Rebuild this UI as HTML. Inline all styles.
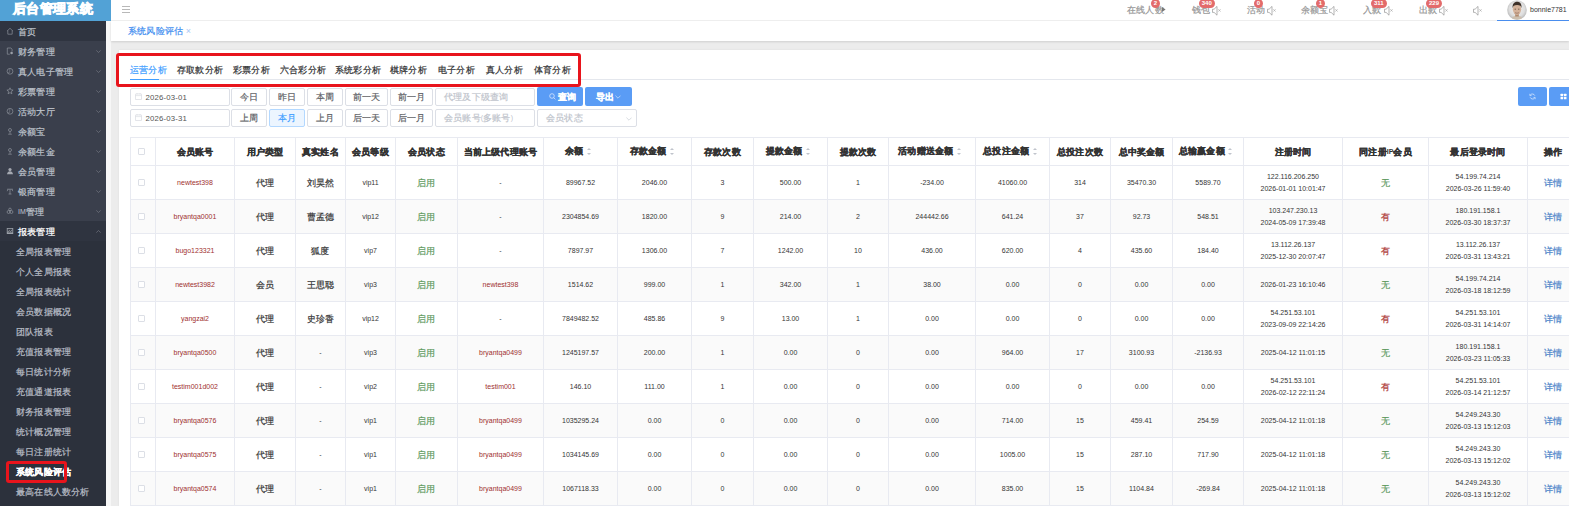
<!DOCTYPE html>
<html><head><meta charset="utf-8">
<style>
*{box-sizing:border-box;margin:0;padding:0}
html,body{width:1569px;height:506px;overflow:hidden;background:#fff;font-family:"Liberation Sans",sans-serif;color:#606266}
.abs{position:absolute}
#logo{position:absolute;left:0;top:0;width:111px;height:21px;background:#52a2d6;color:#fff;font-weight:bold;font-size:9.8px;line-height:17.6px;text-align:center;padding-right:5px}
#logo .z{-webkit-text-stroke:0.8px #fff}
#top{position:absolute;left:111px;top:0;width:1458px;height:21px;background:#fff;border-bottom:1px solid #f0f0f0}
#burger{position:absolute;left:11px;top:6px;width:8px;height:7px}
#burger i{display:block;height:0.8px;background:#b8b8b8;margin-bottom:2.2px}
.nv{position:absolute;top:6px;font-size:7px;line-height:7px;color:#959595;white-space:nowrap}
.bdg{position:absolute;top:-1px;height:8.5px;border-radius:4.5px;background:#e36b6b;color:#fff;font-size:6px;line-height:9px;text-align:center;font-weight:bold}
.spk{position:absolute;top:5.5px}
#ubar{position:absolute;left:1497px;top:20px;width:72px;height:1px;background:#4a8ff0}
#uname{position:absolute;left:1530px;top:6px;font-size:7px;line-height:7px;color:#333}

#side{position:absolute;left:0;top:21px;width:106px;height:485px;background:#2c313c;overflow:hidden}
#strip{position:absolute;left:106px;top:21px;width:5px;height:485px;background:#f7f7f7}
.si{position:relative;height:20px;padding-top:1.6px;line-height:18px;font-size:7px;color:#bfc4cc;padding-left:18px;white-space:nowrap}
.si.home{background:#2f3440}
.si.mid{background:#3a3f4c}
.si.rep{color:#fff;background:#2f3440}
.si .ic{position:absolute;left:5.5px;top:6px}
.si .chev{position:absolute;left:96px;top:9px}
.ss{height:20px;padding-top:1.6px;line-height:18px;font-size:7px;color:#b9bec7;padding-left:16px;white-space:nowrap}
.ss.act{color:#fff;font-weight:bold}

#main{position:absolute;left:111px;top:21px;width:1458px;height:485px;background:#ececec}
#tags{position:absolute;left:111px;top:21px;width:1458px;height:20px;background:#fff;box-shadow:0 1px 2px rgba(0,0,0,.12)}
#tag{position:absolute;left:17px;top:6px;font-size:7px;line-height:7px;color:#3d8cf0;white-space:nowrap}
#tag b{font-weight:normal;color:#a8c8f5;margin-left:2.7px;font-size:9px;vertical-align:-1px}
#card{position:absolute;left:119px;top:50px;width:1450px;height:456px;background:#fff;box-shadow:0 0 2px rgba(0,0,0,.07)}

#tabline{position:absolute;left:130px;top:79px;width:1439px;height:1px;background:#e4e7ed}
.tb{position:absolute;top:66px;font-size:7px;line-height:8px;color:#303133;white-space:nowrap}
.tb.on{color:#409eff}
#tabbar{position:absolute;left:130px;top:79px;width:28.5px;height:1px;background:#409eff}
#redbox{position:absolute;left:115.5px;top:53px;width:465px;height:34px;border:3px solid #e8141c;border-radius:3px}
#redside{position:absolute;left:5.5px;top:461.3px;width:61px;height:21.5px;border:3px solid #e8141c;border-radius:3px}

.in{position:absolute;height:18px;border:1px solid #dcdfe6;border-radius:2px;background:#fff;font-size:7px;line-height:16px;color:#606266;white-space:nowrap}
.in.ph{color:#c0c4cc;padding-left:8px}
.bt{position:absolute;height:18px;border:1px solid #dcdfe6;border-radius:2px;background:#fff;font-size:7px;line-height:16px;color:#606266;text-align:center}
.bt.on{background:#ecf5ff;border-color:#b3d8ff;color:#409eff}
.pb{position:absolute;height:19px;border-radius:2px;background:#5a9cf5;color:#fff;font-size:7px;line-height:19px;text-align:center;font-weight:bold}
.cal{position:absolute;left:4px;top:4.2px}
.in.dt{padding-left:14.6px;font-size:7.8px;letter-spacing:0.15px;color:#555;line-height:17px}

#tbl{position:absolute;left:130px;top:137px;border-collapse:collapse;table-layout:fixed;font-size:7px;color:#353535}
#tbl th,#tbl td{border:1px solid #e8eaf1;text-align:center;vertical-align:middle;white-space:nowrap;overflow:hidden;padding:0}
#tbl th{height:28px;font-weight:bold;color:#333}
#tbl td{height:34px}
#tbl tbody tr:nth-child(even) td{background:#fafafa}
.cb{display:inline-block;position:relative;left:-1.5px;width:7px;height:7px;border:1px solid #dcdfe6;border-radius:1px;background:#fff;vertical-align:middle}
.sort{display:inline-block;width:4px;height:8px;margin-left:3.5px;margin-right:5px;vertical-align:middle;position:relative}
.sort:before{content:"";position:absolute;left:0;top:0;border:2px solid transparent;border-bottom:2px solid #c0c4cc;border-top:0}
.sort:after{content:"";position:absolute;left:0;top:5px;border:2px solid transparent;border-top:2px solid #c0c4cc;border-bottom:0}
td.lk{color:#a03030}
td.gn{color:#5f9a5f}
td.rd{color:#b04040}
td.bl{color:#4a82c8}
td.two .l1,td.two .l2{display:block;line-height:11.5px}
.z{font-size:1.33em;letter-spacing:0.02em;vertical-align:-0.08em;line-height:1px;-webkit-text-stroke:0.2px currentColor}
#tbl th .z,.si.rep .z,.ss.act .z,.pb .z{-webkit-text-stroke:0.25px currentColor}
</style></head><body>
<div id="logo"><span class="z">后台管理系统</span></div>
<div id="top">
  <div id="burger"><i></i><i></i><i></i></div>
</div>
<div class="nv" style="left:1127px"><span class="z">在线人数</span></div><div class="bdg" style="left:1151px;width:9px">2</div><svg class="abs" style="left:1162px;top:7px" width="4" height="5" viewBox="0 0 4 5"><path d="M0 0L3.6 2.5L0 5z" fill="#777"/></svg><div class="nv" style="left:1191.5px"><span class="z">钱包</span></div><div class="bdg" style="left:1198.5px;width:16.5px">340</div><svg class="spk" style="left:1212px" width="10" height="10" viewBox="0 0 10 10"><path d="M0.5 3.2h1.6L5 0.4v8.8L2.1 6.4H0.5z" fill="none" stroke="#8c8c8c" stroke-width="0.65" stroke-linejoin="round"/><path d="M6.3 3.2l2.3 2.4M8.6 3.2L6.3 5.6" stroke="#999" stroke-width="0.55"/></svg><div class="nv" style="left:1246.5px"><span class="z">活动</span></div><div class="bdg" style="left:1254px;width:9px">0</div><svg class="spk" style="left:1267px" width="10" height="10" viewBox="0 0 10 10"><path d="M0.5 3.2h1.6L5 0.4v8.8L2.1 6.4H0.5z" fill="none" stroke="#8c8c8c" stroke-width="0.65" stroke-linejoin="round"/><path d="M6.3 3.2l2.3 2.4M8.6 3.2L6.3 5.6" stroke="#999" stroke-width="0.55"/></svg><div class="nv" style="left:1301px"><span class="z">余额宝</span></div><div class="bdg" style="left:1316px;width:9px">1</div><svg class="spk" style="left:1329px" width="10" height="10" viewBox="0 0 10 10"><path d="M0.5 3.2h1.6L5 0.4v8.8L2.1 6.4H0.5z" fill="none" stroke="#8c8c8c" stroke-width="0.65" stroke-linejoin="round"/><path d="M6.3 3.2l2.3 2.4M8.6 3.2L6.3 5.6" stroke="#999" stroke-width="0.55"/></svg><div class="nv" style="left:1363px"><span class="z">入款</span></div><div class="bdg" style="left:1370.5px;width:16.5px">311</div><svg class="spk" style="left:1384px" width="10" height="10" viewBox="0 0 10 10"><path d="M0.5 3.2h1.6L5 0.4v8.8L2.1 6.4H0.5z" fill="none" stroke="#8c8c8c" stroke-width="0.65" stroke-linejoin="round"/><path d="M6.3 3.2l2.3 2.4M8.6 3.2L6.3 5.6" stroke="#999" stroke-width="0.55"/></svg><div class="nv" style="left:1418.5px"><span class="z">出款</span></div><div class="bdg" style="left:1426px;width:16px">229</div><svg class="spk" style="left:1439px" width="10" height="10" viewBox="0 0 10 10"><path d="M0.5 3.2h1.6L5 0.4v8.8L2.1 6.4H0.5z" fill="none" stroke="#8c8c8c" stroke-width="0.65" stroke-linejoin="round"/><path d="M6.3 3.2l2.3 2.4M8.6 3.2L6.3 5.6" stroke="#999" stroke-width="0.55"/></svg><svg class="spk" style="left:1473px" width="10" height="10" viewBox="0 0 10 10"><path d="M0.5 3.2h1.6L5 0.4v8.8L2.1 6.4H0.5z" fill="none" stroke="#8c8c8c" stroke-width="0.65" stroke-linejoin="round"/><path d="M6.3 3.2l2.3 2.4M8.6 3.2L6.3 5.6" stroke="#999" stroke-width="0.55"/></svg><div id="ubar"></div><svg class="abs" style="left:1507px;top:-0.5px" width="20" height="20" viewBox="0 0 20 20"><defs><radialGradient id="ag" cx="50%" cy="45%" r="55%"><stop offset="0" stop-color="#f4f4f4"/><stop offset="0.7" stop-color="#dedede"/><stop offset="1" stop-color="#b8b8b8"/></radialGradient><clipPath id="ac"><circle cx="10" cy="10" r="9.6"/></clipPath></defs><circle cx="10" cy="10" r="9.8" fill="url(#ag)"/><g clip-path="url(#ac)"><path d="M4 20c0.5-3 2.5-4.2 6-4.2s5.5 1.2 6 4.2z" fill="#cdbfae"/><rect x="8.2" y="13" width="3.6" height="3.5" fill="#b08a70"/><ellipse cx="10" cy="9.3" rx="4.2" ry="5.6" fill="#d4b29a"/><path d="M5.6 8.2c-0.4-4 1.6-6.4 4.5-6.4s4.8 2 4.4 6.4c-0.4-2-1.4-3.2-4.4-3.2s-4.1 1.2-4.5 3.2z" fill="#3e3129"/><path d="M7.6 9.2h1.4M11 9.2h1.4" stroke="#5a4436" stroke-width="0.7"/><path d="M8 12.6c1.2 0.8 2.8 0.8 4 0" stroke="#8a6250" stroke-width="0.6" fill="none"/></g></svg><div id="uname">bonnie7781</div>
<div id="side"><div class="si home"><svg class="ic" width="8" height="8" viewBox="0 0 8 8"><path d="M1 4.2L4 1.3l3 2.9M1.8 3.6v3.6h4.4V3.6" fill="none" stroke="#9ba0a8" stroke-width="0.6"/></svg><span class="z">首页</span></div><div class="si mid"><svg class="ic" width="8" height="8" viewBox="0 0 8 8"><path d="M1.3 1h3.6l1.2 1.2V4.5M1.3 1v6.2h2.5" fill="none" stroke="#9ba0a8" stroke-width="0.6"/><circle cx="5.6" cy="6" r="1.3" fill="#9ba0a8"/></svg><span class="z">财务管理</span><svg class="chev" width="5" height="3" viewBox="0 0 5 3"><path d="M0.3 0.4L2.5 2.5 4.7 0.4" fill="none" stroke="#7d828b" stroke-width="0.6"/></svg></div><div class="si mid"><svg class="ic" width="8" height="8" viewBox="0 0 8 8"><circle cx="4" cy="4.3" r="2.9" fill="none" stroke="#9ba0a8" stroke-width="0.6"/><path d="M2.6 6.3c0.3-1.2 1-1.8 1.6-1.8M3 3h1.4" fill="none" stroke="#9ba0a8" stroke-width="0.6"/></svg><span class="z">真人电子管理</span><svg class="chev" width="5" height="3" viewBox="0 0 5 3"><path d="M0.3 0.4L2.5 2.5 4.7 0.4" fill="none" stroke="#7d828b" stroke-width="0.6"/></svg></div><div class="si mid"><svg class="ic" width="8" height="8" viewBox="0 0 8 8"><path d="M4 0.8l0.9 2.1 2.2 0.2-1.7 1.5 0.5 2.2L4 5.6 2.1 6.8l0.5-2.2L0.9 3.1l2.2-0.2z" fill="none" stroke="#9ba0a8" stroke-width="0.6"/></svg><span class="z">彩票管理</span><svg class="chev" width="5" height="3" viewBox="0 0 5 3"><path d="M0.3 0.4L2.5 2.5 4.7 0.4" fill="none" stroke="#7d828b" stroke-width="0.6"/></svg></div><div class="si mid"><svg class="ic" width="8" height="8" viewBox="0 0 8 8"><circle cx="4" cy="4.3" r="2.9" fill="none" stroke="#9ba0a8" stroke-width="0.6"/><path d="M2.6 6.3c0.3-1.2 1-1.8 1.6-1.8M3 3h1.4" fill="none" stroke="#9ba0a8" stroke-width="0.6"/></svg><span class="z">活动大厅</span><svg class="chev" width="5" height="3" viewBox="0 0 5 3"><path d="M0.3 0.4L2.5 2.5 4.7 0.4" fill="none" stroke="#7d828b" stroke-width="0.6"/></svg></div><div class="si mid"><svg class="ic" width="8" height="8" viewBox="0 0 8 8"><circle cx="4" cy="3" r="1.5" fill="none" stroke="#9ba0a8" stroke-width="0.6"/><path d="M4 4.5v2.3M2.2 7.2h3.6" fill="none" stroke="#9ba0a8" stroke-width="0.6"/></svg><span class="z">余额宝</span><svg class="chev" width="5" height="3" viewBox="0 0 5 3"><path d="M0.3 0.4L2.5 2.5 4.7 0.4" fill="none" stroke="#7d828b" stroke-width="0.6"/></svg></div><div class="si mid"><svg class="ic" width="8" height="8" viewBox="0 0 8 8"><circle cx="4" cy="3" r="1.5" fill="none" stroke="#9ba0a8" stroke-width="0.6"/><path d="M4 4.5v2.3M2.2 7.2h3.6" fill="none" stroke="#9ba0a8" stroke-width="0.6"/></svg><span class="z">余额生金</span><svg class="chev" width="5" height="3" viewBox="0 0 5 3"><path d="M0.3 0.4L2.5 2.5 4.7 0.4" fill="none" stroke="#7d828b" stroke-width="0.6"/></svg></div><div class="si mid"><svg class="ic" width="8" height="8" viewBox="0 0 8 8"><circle cx="4" cy="2.6" r="1.6" fill="#a4a8b0"/><path d="M1 7.2c0.3-2 1.4-3 3-3s2.7 1 3 3z" fill="#a4a8b0"/></svg><span class="z">会员管理</span><svg class="chev" width="5" height="3" viewBox="0 0 5 3"><path d="M0.3 0.4L2.5 2.5 4.7 0.4" fill="none" stroke="#7d828b" stroke-width="0.6"/></svg></div><div class="si mid"><svg class="ic" width="8" height="8" viewBox="0 0 8 8"><path d="M1.2 2.2h5.6M4 2.2v5M2 2.2l-0.8 2M6 2.2l0.8 2M2.5 7h3" fill="none" stroke="#9ba0a8" stroke-width="0.6"/></svg><span class="z">银商管理</span><svg class="chev" width="5" height="3" viewBox="0 0 5 3"><path d="M0.3 0.4L2.5 2.5 4.7 0.4" fill="none" stroke="#7d828b" stroke-width="0.6"/></svg></div><div class="si mid"><svg class="ic" width="8" height="8" viewBox="0 0 8 8"><circle cx="2.6" cy="5" r="1.5" fill="none" stroke="#9ba0a8" stroke-width="0.6"/><circle cx="5.4" cy="5" r="1.5" fill="none" stroke="#9ba0a8" stroke-width="0.6"/><circle cx="4" cy="2.4" r="1.3" fill="none" stroke="#9ba0a8" stroke-width="0.6"/></svg>IM<span class="z">管理</span><svg class="chev" width="5" height="3" viewBox="0 0 5 3"><path d="M0.3 0.4L2.5 2.5 4.7 0.4" fill="none" stroke="#7d828b" stroke-width="0.6"/></svg></div><div class="si rep"><svg class="ic" width="8" height="8" viewBox="0 0 8 8"><rect x="0.8" y="1" width="6.4" height="6" fill="#9ba0a8"/><rect x="1.6" y="1.8" width="4.8" height="3.6" fill="#3a3f4a"/><path d="M1.6 5.2l1.6-1.6 1.2 1 2-1.6" stroke="#c8ccd2" stroke-width="0.6" fill="none"/></svg><span class="z">报表管理</span><svg class="chev" width="5" height="3" viewBox="0 0 5 3"><path d="M0.3 2.6L2.5 0.5 4.7 2.6" fill="none" stroke="#7d828b" stroke-width="0.6"/></svg></div><div class="ss"><span class="z">全局报表管理</span></div><div class="ss"><span class="z">个人全局报表</span></div><div class="ss"><span class="z">全局报表统计</span></div><div class="ss"><span class="z">会员数据概况</span></div><div class="ss"><span class="z">团队报表</span></div><div class="ss"><span class="z">充值报表管理</span></div><div class="ss"><span class="z">每日统计分析</span></div><div class="ss"><span class="z">充值通道报表</span></div><div class="ss"><span class="z">财务报表管理</span></div><div class="ss"><span class="z">统计概况管理</span></div><div class="ss"><span class="z">每日注册统计</span></div><div class="ss act"><span class="z">系统风险评估</span></div><div class="ss"><span class="z">最高在线人数分析</span></div></div>
<div id="strip"></div>
<div id="main"></div>
<div id="tags"><div id="tag"><span class="z">系统风险评估</span><b>×</b></div></div>
<div id="card"></div>

<div class="tb on" style="left:130px"><span class="z">运营分析</span></div>
<div class="tb" style="left:177px"><span class="z">存取款分析</span></div>
<div class="tb" style="left:233px"><span class="z">彩票分析</span></div>
<div class="tb" style="left:280px"><span class="z">六合彩分析</span></div>
<div class="tb" style="left:335px"><span class="z">系统彩分析</span></div>
<div class="tb" style="left:390px"><span class="z">棋牌分析</span></div>
<div class="tb" style="left:438px"><span class="z">电子分析</span></div>
<div class="tb" style="left:486px"><span class="z">真人分析</span></div>
<div class="tb" style="left:534px"><span class="z">体育分析</span></div>
<div id="tabline"></div>
<div id="tabbar"></div>

<div class="in dt" style="left:130px;top:88px;width:100px"><svg class="cal" width="7" height="7" viewBox="0 0 7 7"><rect x="0.4" y="0.9" width="6.2" height="5.7" rx="0.6" fill="none" stroke="#d4d7de" stroke-width="0.7"/><path d="M0.5 2.6h6M2 0.2v1.2M5 0.2v1.2" stroke="#d4d7de" stroke-width="0.6"/></svg>2026-03-01</div>
<div class="bt" style="left:231px;top:88px;width:36px"><span class="z">今日</span></div>
<div class="bt" style="left:269px;top:88px;width:36px"><span class="z">昨日</span></div>
<div class="bt" style="left:307px;top:88px;width:36px"><span class="z">本周</span></div>
<div class="bt" style="left:345px;top:88px;width:43px"><span class="z">前一天</span></div>
<div class="bt" style="left:390px;top:88px;width:43px"><span class="z">前一月</span></div>
<div class="in ph" style="left:435px;top:88px;width:100px"><span class="z">代理及下级查询</span></div>
<div class="pb" style="left:537px;top:87px;width:46px"><svg class="abs" style="left:12px;top:6px" width="7" height="7" viewBox="0 0 7 7"><circle cx="3" cy="3" r="2.3" fill="none" stroke="#e8f0fd" stroke-width="0.7"/><path d="M4.7 4.7L6.4 6.4" stroke="#e8f0fd" stroke-width="0.7"/></svg><span style="position:absolute;left:21px;top:0"><span class="z">查询</span></span></div>
<div class="pb" style="left:585px;top:87px;width:47px"><span style="position:absolute;left:11px;top:0"><span class="z">导出</span></span><svg class="abs" style="left:30px;top:8px" width="6" height="4" viewBox="0 0 6 4"><path d="M0.4 0.6L3 3.2 5.6 0.6" fill="none" stroke="#e8f0fd" stroke-width="0.6"/></svg></div>

<div class="in dt" style="left:130px;top:109px;width:100px"><svg class="cal" width="7" height="7" viewBox="0 0 7 7"><rect x="0.4" y="0.9" width="6.2" height="5.7" rx="0.6" fill="none" stroke="#d4d7de" stroke-width="0.7"/><path d="M0.5 2.6h6M2 0.2v1.2M5 0.2v1.2" stroke="#d4d7de" stroke-width="0.6"/></svg>2026-03-31</div>
<div class="bt" style="left:231px;top:109px;width:36px"><span class="z">上周</span></div>
<div class="bt on" style="left:269px;top:109px;width:36px"><span class="z">本月</span></div>
<div class="bt" style="left:307px;top:109px;width:36px"><span class="z">上月</span></div>
<div class="bt" style="left:345px;top:109px;width:43px"><span class="z">后一天</span></div>
<div class="bt" style="left:390px;top:109px;width:43px"><span class="z">后一月</span></div>
<div class="in ph" style="left:435px;top:109px;width:100px"><span class="z">会员账号</span>(<span class="z">多账号</span>)</div>
<div class="in ph" style="left:537px;top:109px;width:100px"><span class="z">会员状态</span><svg class="abs" style="left:88px;top:6.5px" width="6" height="4" viewBox="0 0 6 4"><path d="M0.4 0.6L3 3.2 5.6 0.6" fill="none" stroke="#c0c4cc" stroke-width="0.6"/></svg></div>

<div class="pb" style="left:1518px;top:87px;width:29px"><svg class="abs" style="left:11px;top:6px" width="7" height="7" viewBox="0 0 7 7"><path d="M5.8 2.6A2.6 2.6 0 0 0 1.2 2.2M1.2 4.4A2.6 2.6 0 0 0 5.8 4.8" fill="none" stroke="#e8f0fd" stroke-width="0.7"/><path d="M0.8 0.8v1.8h1.8M6.2 6.2V4.4H4.4" fill="none" stroke="#e8f0fd" stroke-width="0.6"/></svg></div>
<div class="pb" style="left:1549px;top:87px;width:29px"><svg class="abs" style="left:11px;top:6px" width="7" height="7" viewBox="0 0 7 7"><rect x="0.5" y="0.8" width="2.6" height="2.4" rx="0.5" fill="#fff"/><rect x="3.9" y="0.8" width="2.6" height="2.4" rx="0.5" fill="#fff"/><rect x="0.5" y="3.9" width="2.6" height="2.4" rx="0.5" fill="#fff"/><rect x="3.9" y="3.9" width="2.6" height="2.4" rx="0.5" fill="#fff"/></svg></div>

<table id="tbl" style="width:1448px"><colgroup><col style="width:25px"><col style="width:79px"><col style="width:61px"><col style="width:50px"><col style="width:50px"><col style="width:62px"><col style="width:86px"><col style="width:74px"><col style="width:74px"><col style="width:62px"><col style="width:74px"><col style="width:61px"><col style="width:87px"><col style="width:74px"><col style="width:61px"><col style="width:62px"><col style="width:71px"><col style="width:99px"><col style="width:86px"><col style="width:99px"><col style="width:51px"></colgroup>
<thead><tr><th><i class="cb"></i></th><th><span class="z">会员账号</span></th><th><span class="z">用户类型</span></th><th><span class="z">真实姓名</span></th><th><span class="z">会员等级</span></th><th><span class="z">会员状态</span></th><th><span class="z">当前上级代理账号</span></th><th><span class="z">余额</span><i class="sort"></i></th><th><span class="z">存款金额</span><i class="sort"></i></th><th><span class="z">存款次数</span></th><th><span class="z">提款金额</span><i class="sort"></i></th><th><span class="z">提款次数</span></th><th><span class="z">活动赠送金额</span><i class="sort"></i></th><th><span class="z">总投注金额</span><i class="sort"></i></th><th><span class="z">总投注次数</span></th><th><span class="z">总中奖金额</span></th><th><span class="z">总输赢金额</span><i class="sort"></i></th><th><span class="z">注册时间</span></th><th><span class="z">同注册</span>IP<span class="z">会员</span></th><th><span class="z">最后登录时间</span></th><th><span class="z">操作</span></th></tr></thead>
<tbody>
<tr><td><i class="cb"></i></td><td class="lk">newtest398</td><td><span class="z">代理</span></td><td><span class="z">刘昊然</span></td><td>vip11</td><td class="gn"><span class="z">启用</span></td><td>-</td><td>89967.52</td><td>2046.00</td><td>3</td><td>500.00</td><td>1</td><td>-234.00</td><td>41060.00</td><td>314</td><td>35470.30</td><td>5589.70</td><td class="two"><span class="l1">122.116.206.250</span><span class="l2">2026-01-01 10:01:47</span></td><td class="gn"><span class="z">无</span></td><td class="two"><span class="l1">54.199.74.214</span><span class="l2">2026-03-26 11:59:40</span></td><td class="bl"><span class="z">详情</span></td></tr>
<tr><td><i class="cb"></i></td><td class="lk">bryantqa0001</td><td><span class="z">代理</span></td><td><span class="z">曹孟德</span></td><td>vip12</td><td class="gn"><span class="z">启用</span></td><td>-</td><td>2304854.69</td><td>1820.00</td><td>9</td><td>214.00</td><td>2</td><td>244442.66</td><td>641.24</td><td>37</td><td>92.73</td><td>548.51</td><td class="two"><span class="l1">103.247.230.13</span><span class="l2">2024-05-09 17:39:48</span></td><td class="rd"><span class="z">有</span></td><td class="two"><span class="l1">180.191.158.1</span><span class="l2">2026-03-30 18:37:37</span></td><td class="bl"><span class="z">详情</span></td></tr>
<tr><td><i class="cb"></i></td><td class="lk">bugo123321</td><td><span class="z">代理</span></td><td><span class="z">狐度</span></td><td>vip7</td><td class="gn"><span class="z">启用</span></td><td>-</td><td>7897.97</td><td>1306.00</td><td>7</td><td>1242.00</td><td>10</td><td>436.00</td><td>620.00</td><td>4</td><td>435.60</td><td>184.40</td><td class="two"><span class="l1">13.112.26.137</span><span class="l2">2025-12-30 20:07:47</span></td><td class="rd"><span class="z">有</span></td><td class="two"><span class="l1">13.112.26.137</span><span class="l2">2026-03-31 13:43:21</span></td><td class="bl"><span class="z">详情</span></td></tr>
<tr><td><i class="cb"></i></td><td class="lk">newtest3982</td><td><span class="z">会员</span></td><td><span class="z">王思聪</span></td><td>vip3</td><td class="gn"><span class="z">启用</span></td><td class="lk">newtest398</td><td>1514.62</td><td>999.00</td><td>1</td><td>342.00</td><td>1</td><td>38.00</td><td>0.00</td><td>0</td><td>0.00</td><td>0.00</td><td>2026-01-23 16:10:46</td><td class="gn"><span class="z">无</span></td><td class="two"><span class="l1">54.199.74.214</span><span class="l2">2026-03-18 18:12:59</span></td><td class="bl"><span class="z">详情</span></td></tr>
<tr><td><i class="cb"></i></td><td class="lk">yangzai2</td><td><span class="z">代理</span></td><td><span class="z">史珍香</span></td><td>vip12</td><td class="gn"><span class="z">启用</span></td><td>-</td><td>7849482.52</td><td>485.86</td><td>9</td><td>13.00</td><td>1</td><td>0.00</td><td>0.00</td><td>0</td><td>0.00</td><td>0.00</td><td class="two"><span class="l1">54.251.53.101</span><span class="l2">2023-09-09 22:14:26</span></td><td class="rd"><span class="z">有</span></td><td class="two"><span class="l1">54.251.53.101</span><span class="l2">2026-03-31 14:14:07</span></td><td class="bl"><span class="z">详情</span></td></tr>
<tr><td><i class="cb"></i></td><td class="lk">bryantqa0500</td><td><span class="z">代理</span></td><td>-</td><td>vip3</td><td class="gn"><span class="z">启用</span></td><td class="lk">bryantqa0499</td><td>1245197.57</td><td>200.00</td><td>1</td><td>0.00</td><td>0</td><td>0.00</td><td>964.00</td><td>17</td><td>3100.93</td><td>-2136.93</td><td>2025-04-12 11:01:15</td><td class="gn"><span class="z">无</span></td><td class="two"><span class="l1">180.191.158.1</span><span class="l2">2026-03-23 11:05:33</span></td><td class="bl"><span class="z">详情</span></td></tr>
<tr><td><i class="cb"></i></td><td class="lk">testim001d002</td><td><span class="z">代理</span></td><td>-</td><td>vip2</td><td class="gn"><span class="z">启用</span></td><td class="lk">testim001</td><td>146.10</td><td>111.00</td><td>1</td><td>0.00</td><td>0</td><td>0.00</td><td>0.00</td><td>0</td><td>0.00</td><td>0.00</td><td class="two"><span class="l1">54.251.53.101</span><span class="l2">2026-02-12 22:11:24</span></td><td class="rd"><span class="z">有</span></td><td class="two"><span class="l1">54.251.53.101</span><span class="l2">2026-03-14 21:12:57</span></td><td class="bl"><span class="z">详情</span></td></tr>
<tr><td><i class="cb"></i></td><td class="lk">bryantqa0576</td><td><span class="z">代理</span></td><td>-</td><td>vip1</td><td class="gn"><span class="z">启用</span></td><td class="lk">bryantqa0499</td><td>1035295.24</td><td>0.00</td><td>0</td><td>0.00</td><td>0</td><td>0.00</td><td>714.00</td><td>15</td><td>459.41</td><td>254.59</td><td>2025-04-12 11:01:18</td><td class="gn"><span class="z">无</span></td><td class="two"><span class="l1">54.249.243.30</span><span class="l2">2026-03-13 15:12:03</span></td><td class="bl"><span class="z">详情</span></td></tr>
<tr><td><i class="cb"></i></td><td class="lk">bryantqa0575</td><td><span class="z">代理</span></td><td>-</td><td>vip1</td><td class="gn"><span class="z">启用</span></td><td class="lk">bryantqa0499</td><td>1034145.69</td><td>0.00</td><td>0</td><td>0.00</td><td>0</td><td>0.00</td><td>1005.00</td><td>15</td><td>287.10</td><td>717.90</td><td>2025-04-12 11:01:18</td><td class="gn"><span class="z">无</span></td><td class="two"><span class="l1">54.249.243.30</span><span class="l2">2026-03-13 15:12:02</span></td><td class="bl"><span class="z">详情</span></td></tr>
<tr><td><i class="cb"></i></td><td class="lk">bryantqa0574</td><td><span class="z">代理</span></td><td>-</td><td>vip1</td><td class="gn"><span class="z">启用</span></td><td class="lk">bryantqa0499</td><td>1067118.33</td><td>0.00</td><td>0</td><td>0.00</td><td>0</td><td>0.00</td><td>835.00</td><td>15</td><td>1104.84</td><td>-269.84</td><td>2025-04-12 11:01:18</td><td class="gn"><span class="z">无</span></td><td class="two"><span class="l1">54.249.243.30</span><span class="l2">2026-03-13 15:12:02</span></td><td class="bl"><span class="z">详情</span></td></tr>
</tbody></table>

<div id="redbox"></div>
<div id="redside"></div>
</body></html>
